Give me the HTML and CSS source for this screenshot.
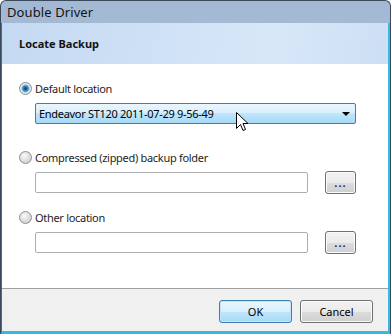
FILE: index.html
```html
<!DOCTYPE html>
<html lang="en">
<head>
    <meta charset="UTF-8">
    <title>Double Driver</title>
    <link rel="stylesheet" href="styles.css">
</head>
<body>
    <div class="window">
        <div class="titlebar">Double Driver</div>
        <div class="client">
            <div class="header">Locate Backup</div>

            <div class="content">
                <!-- Default location -->
                <div class="group">
                    <label class="option"><span class="radio checked"></span>Default location</label>
                    <div class="combo">
                        <span>Endeavor ST120 2011-07-29 9-56-49</span>
                        <span class="arrow"></span>
                    </div>
                </div>

                <!-- Zipped folder -->
                <div class="group second">
                    <label class="option"><span class="radio"></span>Compressed (zipped) backup folder</label>
                    <div class="field-row">
                        <div class="textbox"></div>
                        <button class="browse">...</button>
                    </div>
                </div>

                <!-- Other location -->
                <div class="group third">
                    <label class="option"><span class="radio"></span>Other location</label>
                    <div class="field-row">
                        <div class="textbox"></div>
                        <button class="browse">...</button>
                    </div>
                </div>

                <svg class="cursor" width="13" height="21" viewBox="0 0 13 21">
                    <path d="M0.5 0.5 L0.5 16.5 L4.5 12.5 L7 18.5 L9.5 17.5 L7 11.5 L12 11.5 Z" fill="#fff" stroke="#000" stroke-width="1"/>
                </svg>
            </div>

            <div class="footer">
                <button class="btn default">OK</button>
                <button class="btn">Cancel</button>
            </div>
        </div>
    </div>
</body>
</html>
```

FILE: styles.css
```css
body {
    margin: 0;
    font-family: "Noto Sans", "Open Sans", sans-serif;
    font-size: 11px;
    letter-spacing: -0.3px;
    color: #1e1e1e;
    background: #ffffff;
}

.window {
    width: 391px;
    height: 334px;
    box-sizing: border-box;
    display: flex;
    flex-direction: column;
    border: 1px solid #39485a;
    border-bottom: none;
    border-radius: 6px 6px 0 0;
    background: linear-gradient(#a3b9d3, #b3c7dd);
    overflow: hidden;
}

.titlebar {
    height: 22px;
    line-height: 22px;
    padding-left: 6px;
    font-size: 13px;
    letter-spacing: 0.1px;
    color: #141414;
}

.client {
    flex: 1;
    display: flex;
    flex-direction: column;
    border-left: 1px solid #3f6f9f;
    border-right: 2px solid #38b9e2;
    border-bottom: 3px solid #38b9e2;
    box-shadow: inset -1px 0 0 #7f8c99;
}

.header {
    height: 41px;
    line-height: 41px;
    padding-left: 17px;
    font-weight: bold;
    letter-spacing: 0;
    color: #141414;
    background: linear-gradient(100deg, #c4d9f2 0%, #cfe1f6 40%, #d8e7f8 70%, #cddff5 100%);
}

.content {
    position: relative;
    flex: 1;
    background: #ffffff;
    padding: 16px 0 0 17px;
}

.option {
    display: flex;
    align-items: center;
    height: 16px;
    gap: 3px;
}

.radio {
    width: 11px;
    height: 11px;
    border-radius: 50%;
    border: 1px solid #8e8f8f;
    background: radial-gradient(circle at 40% 35%, #fafafa, #d4d4d4 70%, #c8c8c8);
}

.radio.checked {
    background: radial-gradient(circle, #0c3f6b 0, #2e76aa 2px, #77b7dc 3.5px, #e4eef6 4.5px, #dcdcdc 6px);
}

.combo {
    margin: 7px 0 0 16px;
    width: 321px;
    height: 21px;
    box-sizing: border-box;
    border: 1px solid #3c7fb1;
    border-radius: 2px;
    background: linear-gradient(#eaf6fd 0%, #d9f0fc 45%, #bee6fd 50%, #a7d9f5 100%);
    display: flex;
    align-items: center;
    justify-content: space-between;
    padding: 0 5px 0 3px;
    color: #000;
}

.arrow {
    width: 0;
    height: 0;
    border-left: 4px solid transparent;
    border-right: 4px solid transparent;
    border-top: 4px solid #000;
}

.second {
    margin-top: 25px;
}

.third {
    margin-top: 15px;
}

.field-row {
    display: flex;
    align-items: flex-start;
    gap: 17px;
    margin: 6px 0 0 16px;
}

.textbox {
    margin-top: 1px;
    width: 273px;
    height: 21px;
    box-sizing: border-box;
    border: 1px solid #abadb3;
    border-radius: 2px;
    background: #ffffff;
}

.browse,
.btn {
    font-family: "Noto Sans", "Open Sans", sans-serif;
    font-size: 11px;
    color: #000;
    box-sizing: border-box;
    border: 1px solid #707070;
    border-radius: 3px;
    background: linear-gradient(#f2f2f2 0%, #ebebeb 50%, #dddddd 51%, #cfcfcf 100%);
    box-shadow: inset 0 0 0 1px #fbfbfb;
    padding: 0;
}

.browse {
    width: 31px;
    height: 23px;
    line-height: 18px;
    color: #1c1a6e;
    font-weight: bold;
    letter-spacing: 1px;
}

.cursor {
    position: absolute;
    left: 234px;
    top: 48px;
}

.footer {
    height: 43px;
    box-sizing: border-box;
    border-top: 1px solid #a0a0a0;
    background: #f0f0f0;
    display: flex;
    justify-content: flex-end;
    align-items: flex-start;
    gap: 8px;
    padding: 11px 15px 0 0;
}

.btn {
    width: 73px;
    height: 23px;
}

.btn.default {
    border-color: #3c7fb1;
    background: linear-gradient(#eaf6fd 0%, #d9f0fc 50%, #bee6fd 51%, #a7d9f5 100%);
    box-shadow: inset 0 0 0 1px #c2e4f6;
}
```
